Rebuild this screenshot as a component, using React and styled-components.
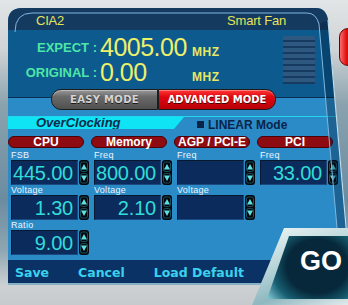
import React from 'react';
import styled, { createGlobalStyle } from 'styled-components';

const Global = createGlobalStyle`
  html, body { margin: 0; padding: 0; background: #c9cdd0; }
  body { width: 348px; height: 305px; overflow: hidden; font-family: "Liberation Sans", Arial, sans-serif; }
  * { box-sizing: border-box; }
`;

const Frame = styled.div`
  position: relative;
  width: 348px;
  height: 305px;
  overflow: hidden;
  padding: 8px 0 0 8px;
  background: linear-gradient(180deg, #e2e5e6 0px, #cfd3d5 50px, #8aa2ae 105px, #6b8ca0 200px, #8ea6b2 250px, #cdd1d3 286px, #c6cacc 305px);
`;

const Panel = styled.div`
  width: 340px;
  height: 277px;
  display: flex;
  flex-direction: column;
  background: #2b8bc7;
  clip-path: path('M0,14 Q0,0 14,0 L308,0 Q318,0 320,12 L342,262 L342,277 L0,277 Z');
`;

const Header = styled.div`
  height: 22px;
  flex: none;
  display: flex;
  justify-content: space-between;
  padding: 3px 62px 0 28px;
  background: #153a60;
  color: #e4e45a;
  font-size: 13px;
  line-height: 19px;
  letter-spacing: -0.2px;
`;

const Upper = styled.div`
  height: 68px;
  flex: none;
  display: flex;
  background: #0c5a8e;
  border-bottom: 1px solid #0a2e52;
`;

const Readouts = styled.div`
  display: flex;
  flex-direction: column;
  padding-top: 5px;
`;

const ReadRow = styled.div`
  display: flex;
  align-items: baseline;
  height: 25px;
`;

const ReadLabel = styled.span`
  align-self: flex-start;
  width: 89px;
  text-align: right;
  white-space: pre;
  font-weight: bold;
  font-size: 13px;
  line-height: 25px;
  color: #4ee6a6;
`;

const ReadValue = styled.span`
  width: 92px;
  margin-left: 3px;
  font-size: 25px;
  line-height: 25px;
  letter-spacing: -0.5px;
  color: #ecf06a;
`;

const Unit = styled.span`
  font-weight: bold;
  font-size: 12px;
  letter-spacing: 0.5px;
  color: #e6e860;
`;

const Bars = styled.div`
  width: 32px;
  height: 48px;
  margin: 6px 33px 0 auto;
  background: repeating-linear-gradient(180deg, #2f5880 0 4px, #163a60 4px 6px);
`;

const Lower = styled.div`
  flex: 1;
  display: flex;
  flex-direction: column;
`;

const ModeRow = styled.div`
  display: flex;
  height: 21px;
  margin: -9px 0 6px 43px;
`;

const ModeButton = styled.div`
  width: ${p => (p.$red ? 118 : 107)}px;
  height: 21px;
  display: flex;
  align-items: center;
  justify-content: center;
  font-family: "DejaVu Sans", sans-serif;
  font-weight: bold;
  font-size: 10px;
  letter-spacing: ${p => (p.$red ? 0 : 0.3)}px;
  border: 1px solid #1c1c1c;
  border-radius: ${p => (p.$red ? '0 10px 10px 0' : '10px 0 0 10px')};
  color: ${p => (p.$red ? '#ffffff' : '#d4d4d4')};
  text-shadow: 0 1px 0 rgba(0, 0, 0, 0.7);
  background: ${p =>
    p.$red
      ? 'linear-gradient(180deg, #ff3a3a 0%, #e00810 35%, #b80008 100%)'
      : 'linear-gradient(180deg, #9a9a9a 0%, #6a6a6a 35%, #505050 100%)'};
  box-shadow: inset 0 1px 0 rgba(255, 255, 255, 0.35);
`;

const SectionBar = styled.div`
  display: flex;
  align-items: center;
  height: 13px;
  border-top: 1px solid #22d4ec;
`;

const OverTab = styled.div`
  width: 176px;
  height: 12px;
  padding-left: 28px;
  background: #0ee4f4;
  clip-path: polygon(0 0, 100% 0, calc(100% - 10px) 100%, 0 100%);
  font-weight: bold;
  font-style: italic;
  font-size: 13px;
  line-height: 12px;
  color: #0c2a4c;
`;

const LinearMode = styled.div`
  display: flex;
  align-items: center;
  gap: 4px;
  margin: 3px 0 0 13px;
  font-weight: bold;
  font-size: 12px;
  color: #0a2448;
`;

const Square = styled.span`
  width: 7px;
  height: 7px;
  background: #0a2448;
`;

const Columns = styled.div`
  display: grid;
  grid-template-columns: repeat(4, 76px);
  column-gap: 7px;
  align-items: start;
  margin-top: 7px;
`;

const Column = styled.div`
  display: flex;
  flex-direction: column;
`;

const Pill = styled.div`
  height: 12px;
  border-radius: 6px;
  background: #8e0b12;
  border: 1px solid #4d0006;
  color: #ffffff;
  font-weight: bold;
  font-size: 12px;
  line-height: 10px;
  text-align: center;
  white-space: nowrap;
`;

const Fields = styled.div`
  display: flex;
  flex-direction: column;
  margin: 2px 0 0 3px;
`;

const FieldLabel = styled.div`
  height: 10px;
  font-size: 9px;
  line-height: 10px;
  letter-spacing: 0.3px;
  color: #eef4ff;
`;

const FieldRow = styled.div`
  display: flex;
  gap: 1px;
  height: 25px;
  & > svg { flex: none; }
`;

const ValueBox = styled.div`
  flex: none;
  width: 67px;
  height: 25px;
  padding-right: 4px;
  background: #0b2b5c;
  border: 1px solid #08182f;
  border-right-color: #1a4a80;
  border-bottom-color: #1a4a80;
  color: #32dcd8;
  font-size: 20px;
  line-height: 24px;
  text-align: right;
  white-space: nowrap;
  letter-spacing: -0.2px;
`;

const Footer = styled.div`
  height: 25px;
  flex: none;
  display: flex;
  align-items: center;
  gap: 29px;
  padding: 1px 0 0 7px;
  background: #0a3264;
  border-bottom: 2px solid #86b0c4;
  font-family: "DejaVu Sans", sans-serif;
  font-weight: bold;
  font-size: 12.5px;
  color: #3ad2ee;
`;

const Deco = styled.svg`
  position: absolute;
  left: 0;
  top: 0;
  pointer-events: none;
`;

const SideButton = styled.div`
  position: absolute;
  left: 339px;
  top: 28px;
  width: 18px;
  height: 38px;
  border-radius: 9px;
  border: 1px solid #6a0000;
  background: linear-gradient(90deg, #ff6a6a 0%, #e01010 40%, #a00000 100%);
`;

const GoRim = styled.div`
  position: absolute;
  left: 252px;
  top: 228px;
  width: 96px;
  height: 77px;
  display: flex;
  padding: 8px 0 6px 15px;
  clip-path: polygon(32px 0, 100% 0, 100% 100%, 0 100%);
  background: linear-gradient(160deg, #f4f9f9 0%, #b4d2d6 45%, #8fb8c0 70%, #e2eaec 100%);
`;

const GoBody = styled.div`
  flex: 1;
  display: flex;
  justify-content: flex-end;
  padding: 12px 6px 0 0;
  clip-path: polygon(22px 0, 100% 0, 100% 100%, 0 100%);
  background: radial-gradient(ellipse 75% 85% at 62% 48%, #06283a 50%, #175f72 75%, #7cc4d0 100%);
  color: #ffffff;
  font-weight: bold;
  font-size: 27px;
  line-height: 27px;
`;

function Spinner() {
  return (
    <svg width="10" height="25" viewBox="0 0 10 25">
      <rect x="0" y="0" width="10" height="25" rx="3" fill="#04080e" />
      <rect x="1.5" y="2" width="7" height="9.5" rx="2" fill="none" stroke="#1c6672" strokeWidth="0.8" />
      <rect x="1.5" y="13.5" width="7" height="9.5" rx="2" fill="none" stroke="#1c6672" strokeWidth="0.8" />
      <path d="M5 4 L8 9.5 L2 9.5 Z" fill="#5ee0e0" />
      <path d="M5 21 L8 15.5 L2 15.5 Z" fill="#5ee0e0" />
    </svg>
  );
}

function Field({ label, value }) {
  return (
    <>
      <FieldLabel>{label}</FieldLabel>
      <FieldRow>
        <ValueBox>{value}</ValueBox>
        <Spinner />
      </FieldRow>
    </>
  );
}

const groups = [
  { name: 'CPU', fields: [['FSB', '445.00'], ['Voltage', '1.30'], ['Ratio', '9.00']] },
  { name: 'Memory', fields: [['Freq', '800.00'], ['Voltage', '2.10']] },
  { name: 'AGP / PCI-E', fields: [['Freq', ''], ['Voltage', '']] },
  { name: 'PCI', fields: [['Freq', '33.00']] },
];

export default function App() {
  return (
    <>
      <Global />
      <Frame>
        <Panel>
          <Header>
            <span>CIA2</span>
            <span>Smart Fan</span>
          </Header>
          <Upper>
            <Readouts>
              <ReadRow>
                <ReadLabel>EXPECT :</ReadLabel>
                <ReadValue>4005.00</ReadValue>
                <Unit>MHZ</Unit>
              </ReadRow>
              <ReadRow>
                <ReadLabel>ORIGINAL :</ReadLabel>
                <ReadValue>0.00</ReadValue>
                <Unit>MHZ</Unit>
              </ReadRow>
            </Readouts>
            <Bars />
          </Upper>
          <Lower>
            <ModeRow>
              <ModeButton>EASY MODE</ModeButton>
              <ModeButton $red>ADVANCED MODE</ModeButton>
            </ModeRow>
            <SectionBar>
              <OverTab>OverClocking</OverTab>
              <LinearMode>
                <Square />
                LINEAR Mode
              </LinearMode>
            </SectionBar>
            <Columns>
              {groups.map(g => (
                <Column key={g.name}>
                  <Pill>{g.name}</Pill>
                  <Fields>
                    {g.fields.map(([l, v], i) => (
                      <Field key={i} label={l} value={v} />
                    ))}
                  </Fields>
                </Column>
              ))}
            </Columns>
          </Lower>
          <Footer>
            <span>Save</span>
            <span>Cancel</span>
            <span>Load Default</span>
          </Footer>
        </Panel>
        <Deco width="348" height="305" viewBox="0 0 348 305">
          <polygon points="319,24 340,262 350,262 328,20" fill="rgba(4,28,56,0.35)" />
          <path d="M15,32 Q15,13 32,13 L307,13 Q316,13 319,24 L340,262" fill="none" stroke="#7fb6e0" strokeWidth="1" />
          <path d="M328,20 L350,272" fill="none" stroke="#c0dcec" strokeWidth="1.2" />
        </Deco>
        <SideButton />
        <GoRim>
          <GoBody>GO</GoBody>
        </GoRim>
      </Frame>
    </>
  );
}
